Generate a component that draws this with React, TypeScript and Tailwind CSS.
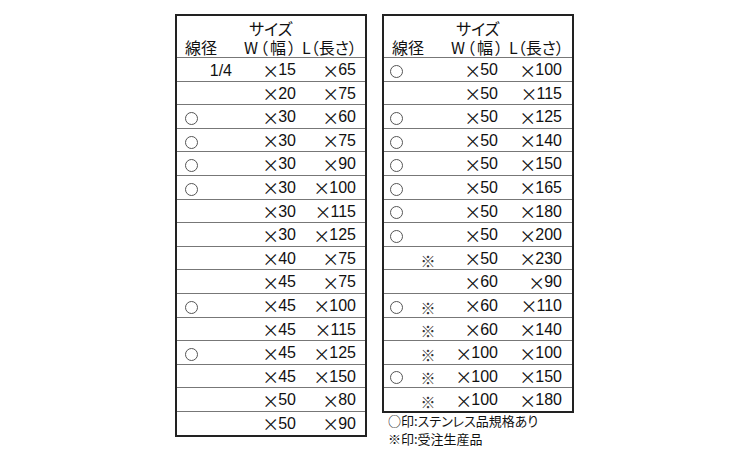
type Row = { c: boolean; s?: string; mark?: boolean; w: string; l: string }

const leftRows: Row[] = [
  { c: false, s: "1/4", w: "15", l: "65" },
  { c: false, w: "20", l: "75" },
  { c: true, w: "30", l: "60" },
  { c: true, w: "30", l: "75" },
  { c: true, w: "30", l: "90" },
  { c: true, w: "30", l: "100" },
  { c: false, w: "30", l: "115" },
  { c: false, w: "30", l: "125" },
  { c: false, w: "40", l: "75" },
  { c: false, w: "45", l: "75" },
  { c: true, w: "45", l: "100" },
  { c: false, w: "45", l: "115" },
  { c: true, w: "45", l: "125" },
  { c: false, w: "45", l: "150" },
  { c: false, w: "50", l: "80" },
  { c: false, w: "50", l: "90" },
]

const rightRows: Row[] = [
  { c: true, w: "50", l: "100" },
  { c: false, w: "50", l: "115" },
  { c: true, w: "50", l: "125" },
  { c: true, w: "50", l: "140" },
  { c: true, w: "50", l: "150" },
  { c: true, w: "50", l: "165" },
  { c: true, w: "50", l: "180" },
  { c: true, w: "50", l: "200" },
  { c: false, mark: true, w: "50", l: "230" },
  { c: false, w: "60", l: "90" },
  { c: true, mark: true, w: "60", l: "110" },
  { c: false, mark: true, w: "60", l: "140" },
  { c: false, mark: true, w: "100", l: "100" },
  { c: true, mark: true, w: "100", l: "150" },
  { c: false, mark: true, w: "100", l: "180" },
]

const jp = "font-['Noto_Sans_CJK_JP',sans-serif] [font-feature-settings:'palt']"
const num = "font-['Liberation_Sans','Noto_Sans_CJK_JP',sans-serif]"

function Circle() {
  return <div className="w-[13px] h-[13px] rounded-full border border-[#555]" />
}

function Times({ v }: { v: string }) {
  return (
    <span className="inline-flex items-center">
      <span className="inline-block w-[15px] text-center text-[17px] leading-none font-['Noto_Sans_CJK_JP',sans-serif]">×</span>
      <span className="ml-[1px]">{v}</span>
    </span>
  )
}

function Header() {
  return (
    <div className={`h-[41px] relative text-[16px] text-[#111] whitespace-nowrap ${jp}`}>
      <div className="absolute top-[3px] left-[72px] leading-[18px]">サイズ</div>
      <div className="absolute top-[22px] left-[8px] leading-[18px]">線径</div>
      <div className="absolute top-[22px] left-[67px] leading-[18px] tracking-[2px]">W（幅）</div>
      <div className="absolute top-[22px] left-[125px] leading-[18px]">L（長さ）</div>
    </div>
  )
}

function LeftTable() {
  return (
    <div className="w-[192px] border-2 border-[#222] bg-white">
      <Header />
      {leftRows.map((r, i) => (
        <div
          key={i}
          className={`h-[23.6px] border-t border-[#777] grid grid-cols-[61px_62px_65px] items-center text-[16px] text-[#111] ${num}`}
        >
          <div className="flex items-center justify-between pl-[8px] pr-[6px]">
            {r.c ? <Circle /> : <span />}
            {r.s ? <span>{r.s}</span> : null}
          </div>
          <div className="text-right pr-[4px]">
            <Times v={r.w} />
          </div>
          <div className="text-right pr-[9px]">
            <Times v={r.l} />
          </div>
        </div>
      ))}
    </div>
  )
}

function RightTable() {
  return (
    <div className="w-[192px] border-2 border-[#222] bg-white">
      <Header />
      {rightRows.map((r, i) => (
        <div
          key={i}
          className={`h-[23.6px] border-t border-[#777] grid grid-cols-[30px_28px_60px_70px] items-center text-[16px] text-[#111] ${num}`}
        >
          <div className="pl-[6px]">{r.c ? <Circle /> : null}</div>
          <div className="text-center text-[15px] text-[#333] leading-none font-['Noto_Sans_CJK_JP',sans-serif]">
            {r.mark ? "※" : ""}
          </div>
          <div className="text-right pr-[4px]">
            <Times v={r.w} />
          </div>
          <div className="text-right pr-[10px]">
            <Times v={r.l} />
          </div>
        </div>
      ))}
    </div>
  )
}

export default function App() {
  return (
    <div className="w-[750px] h-[450px] bg-white overflow-hidden">
      <div className="flex items-start gap-[15px] pl-[175px] pt-[14px]">
        <LeftTable />
        <div className="flex flex-col">
          <RightTable />
          <div className={`pl-[6px] -mt-[1px] text-[13px] leading-[18px] text-[#111] whitespace-nowrap ${jp}`}>
            <div>○印:ステンレス品規格あり</div>
            <div>※印:受注生産品</div>
          </div>
        </div>
      </div>
    </div>
  )
}
